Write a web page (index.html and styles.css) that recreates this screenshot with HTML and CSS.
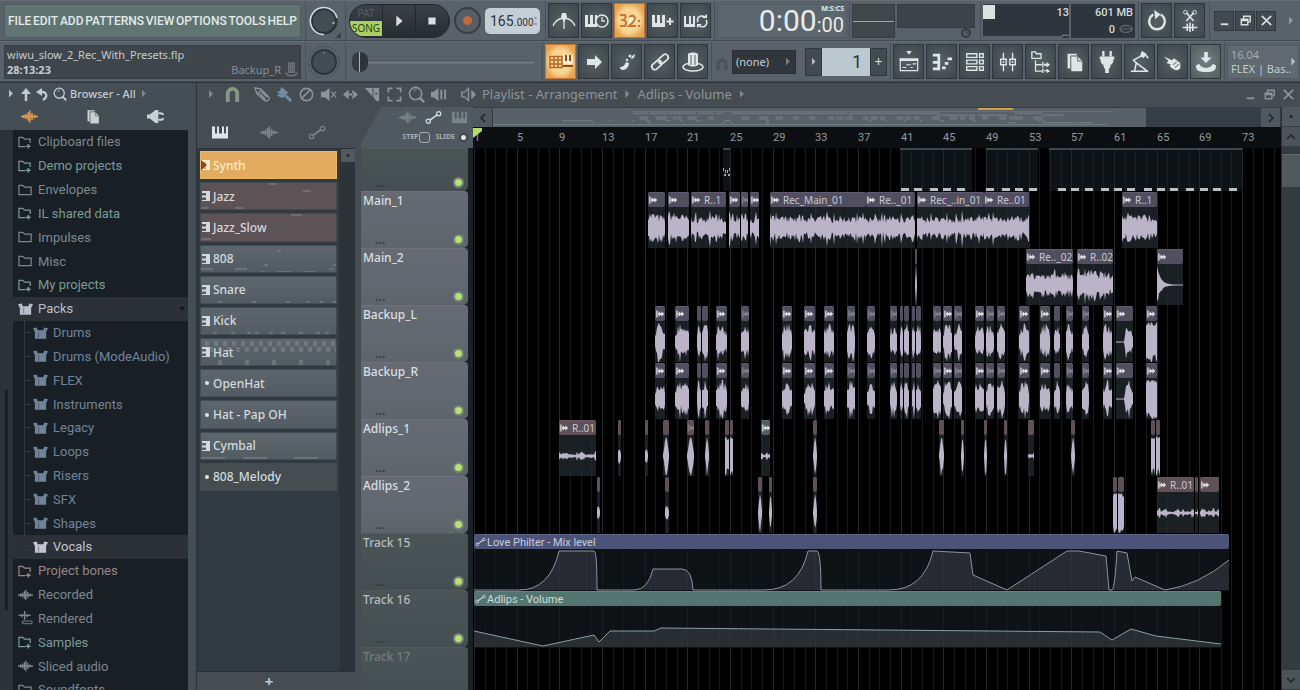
FILE: index.html
```html
<!DOCTYPE html>
<html lang="en">
<head>
<meta charset="UTF-8">
<meta name="viewport" content="width=device-width, initial-scale=1.0">
<title>wiwu_slow_2_Rec_With_Presets.flp</title>
<link rel="stylesheet" href="styles.css">
</head>
<body>
<svg class="defs" aria-hidden="true">
    <symbol id="i-play" viewBox="0 0 20 20"><path d="M7 4l7 6-7 6z" fill="currentColor"/></symbol>
    <symbol id="i-stop" viewBox="0 0 20 20"><path d="M6 6h8v8H6z" fill="currentColor"/></symbol>
    <symbol id="i-metro" viewBox="0 0 24 20"><path d="M1 15C3 10 6 8 11 7M13 7c5 1 8 3 10 8M12 8v10" fill="none" stroke="currentColor" stroke-width="1.300"/><path d="M10 2h4l1 4-3 5-3-5z" fill="currentColor"/></symbol>
    <symbol id="i-wait" viewBox="0 0 24 20"><path d="M0 4h3v9h2V4h3v9h2V4h2v12H0z" fill="currentColor"/><circle cx="17" cy="10" r="6" fill="#4a5459" stroke="currentColor" stroke-width="1.500"/><path d="M17 6v4h3" fill="none" stroke="currentColor" stroke-width="1.300"/></symbol>
    <symbol id="i-count" viewBox="0 0 24 20"><path d="M11 5l8 5-8 5z" fill="#fff6dc"/><path d="M2 4h5q2 3-2 5 5 1 2 6H2" fill="none" stroke="#c47632" stroke-width="2"/><path d="M11 6q5-3 6 1 0 3-6 8h7" fill="none" stroke="#c47632" stroke-width="2"/><path d="M20 9h2v2h-2zM20 14h2v2h-2z" fill="#c47632"/></symbol>
    <symbol id="i-keysplus" viewBox="0 0 24 20"><path d="M1 4h3v8h2V4h3v8h2V4h3v12H1z" fill="currentColor"/><path d="M19 7v7M15.500 10.500h7" stroke="currentColor" stroke-width="2"/></symbol>
    <symbol id="i-keysloop" viewBox="0 0 24 20"><path d="M0 5h2v8h3V5h2v8h2V5h2v11H0z" fill="currentColor"/><path d="M14 11a4 4 0 0 1 7-4M22 9a4 4 0 0 1-7 5" fill="none" stroke="currentColor" stroke-width="1.600"/><path d="M18 7h5V3zM18 13h-5v4z" fill="currentColor"/></symbol>
    <symbol id="i-typing" viewBox="0 0 24 20"><path d="M1 4.500h12v11H1zM1 8h12M1 12h12M5 4v12M9 4v12" fill="none" stroke="#b5692b" stroke-width="1.500"/><path d="M14 3h10v9H14z" fill="#fff0d0"/><path d="M17 3v6M21 3v6M14 14h10" stroke="#8c4a22" stroke-width="2"/></symbol>
    <symbol id="i-arrow" viewBox="0 0 24 20"><path d="M5 7h8V3l7 7-7 7v-4H5z" fill="currentColor"/></symbol>
    <symbol id="i-steps" viewBox="0 0 24 20"><path d="M5 15c3 0 5-2 6-5l3 1c0 4-3 7-6 7-2 0-3-1-3-3z" fill="currentColor"/><circle cx="12" cy="8" r="1.200" fill="currentColor"/><circle cx="15" cy="4" r="1.500" fill="currentColor"/><path d="M16 7l1-3 3-2-1 4z" fill="currentColor"/></symbol>
    <symbol id="i-link" viewBox="0 0 24 20"><g fill="none" stroke="currentColor" stroke-width="1.800" transform="rotate(-42 12 10)"><rect x="2" y="7" width="11" height="6" rx="3"/><rect x="11" y="7" width="11" height="6" rx="3"/></g></symbol>
    <symbol id="i-hat" viewBox="0 0 24 20"><ellipse cx="12" cy="15" rx="10" ry="4" fill="none" stroke="currentColor" stroke-width="1.500"/><path d="M7 2c2-2 8-2 10 0v11c-3 2-7 2-10 0z" fill="currentColor"/><path d="M10 3v10M14 3v10" stroke="#59646a"/></symbol>
    <symbol id="i-playlist" viewBox="0 0 24 24"><path d="M9 0h6l-3 4zM2 8h20v3H2z" fill="currentColor"/><path d="M2.500 8v13.500h19V8M5 18h4M9 15h5M14 18h2M16 14h4" fill="none" stroke="currentColor" stroke-width="1.300"/></symbol>
    <symbol id="i-piano" viewBox="0 0 24 24"><path d="M2 3h8v18H2v-3h5v-4H2v-3h5V6H2z" fill="currentColor"/><path d="M12 17h4v3h-4zM15 12h4v3h-4zM18 7h5v3h-5z" fill="currentColor"/></symbol>
    <symbol id="i-rack" viewBox="0 0 24 24"><path d="M3 3h11v4H3zM3 10h11v4H3zM3 17h11v4H3zM17 3h4v4h-4zM17 10h4v4h-4zM17 17h4v4h-4z" fill="none" stroke="currentColor" stroke-width="1.500"/></symbol>
    <symbol id="i-mixer" viewBox="0 0 24 24"><path d="M7 2v7M7 15v7M17 2v7M17 15v7M4 9h6v6H4zM14 9h6v6h-6zM7 11v2M17 11v2" fill="none" stroke="currentColor" stroke-width="1.500"/></symbol>
    <symbol id="i-tree" viewBox="0 0 24 24"><path d="M2 8V1h4l1 2h5v5zM6 10v12h7M6 15h7M14 12v6M14 19v5" fill="none" stroke="currentColor" stroke-width="1.400"/><path d="M15 14h3v-2l4 3-4 3v-2h-3zM15 21h3v-2l4 3-4 2v-2h-3z" fill="currentColor"/></symbol>
    <symbol id="i-pages" viewBox="0 0 24 24"><path d="M5 3h10v2H8v14H5z" fill="currentColor"/><path d="M9 6h7l5 5v11H9z" fill="currentColor"/><path d="M16 6v5h5" fill="none" stroke="#59636a"/></symbol>
    <symbol id="i-plug" viewBox="0 0 24 24"><path d="M8 0v6M16 0v6" stroke="currentColor" stroke-width="2.500"/><path d="M4 6h16v3h-1c0 4-1 5-3 6l-1 4h-1v5h-4v-5H9l-1-4c-2-1-3-2-3-6H4z" fill="currentColor"/></symbol>
    <symbol id="i-man" viewBox="0 0 24 24"><path d="M14 0l5 3-3 5-4-3z" fill="currentColor"/><path d="M14 5L5 10l3 3-2 9M8 13l12 9M2 22h19M18 4l3 4" fill="none" stroke="currentColor" stroke-width="1.700"/></symbol>
    <symbol id="i-hand" viewBox="0 0 24 24"><path d="M2 6l9 4 2-2 7 5v6l-3 2c-4 0-6-2-9-5l2-1-5-2 2-2z" fill="currentColor"/><path d="M12 15l4-3M14 18l5-4" stroke="#4b555a"/></symbol>
    <symbol id="i-download" viewBox="0 0 24 24"><path d="M10 1h4v6h4l-6 6-6-6h4zM1 16c3-2 4-2 5 0 3 3 9 3 12 0 1-2 2-2 5 0 0 5-3 7-11 7S1 21 1 16z" fill="currentColor"/></symbol>
    <symbol id="i-undo" viewBox="0 0 24 24"><path d="M8 5a8.500 8.500 0 1 0 8 0" fill="none" stroke="currentColor" stroke-width="2.500"/><path d="M9 0l7 5-6 5z" fill="currentColor"/></symbol>
    <symbol id="i-cut" viewBox="0 0 24 24"><path d="M8 3l8 9M16 3l-8 9M4 19h16M9 15v8M12 14v10M15 15v8" fill="none" stroke="currentColor" stroke-width="1.700"/><circle cx="7" cy="2.500" r="2" fill="none" stroke="currentColor"/><circle cx="17" cy="2.500" r="2" fill="none" stroke="currentColor"/></symbol>
    <symbol id="i-min" viewBox="0 0 16 16"><path d="M4 12h8" stroke="currentColor" stroke-width="2"/></symbol>
    <symbol id="i-max" viewBox="0 0 16 16"><path d="M3.500 6.500h7v6h-7zM3 8h8M6 6V3.500h7v6h-2.500" fill="none" stroke="currentColor" stroke-width="1.500"/></symbol>
    <symbol id="i-close" viewBox="0 0 16 16"><path d="M3 3l10 10M13 3L3 13" stroke="currentColor" stroke-width="1.700"/></symbol>
    <symbol id="i-magnet" viewBox="0 0 18 18"><path d="M4 16V8a5 5 0 0 1 10 0v8" fill="none" stroke="currentColor" stroke-width="4"/></symbol>
    <symbol id="i-magnet-on" viewBox="0 0 18 18"><path d="M4 17V8a5 5 0 0 1 10 0v9" fill="none" stroke="#8b959b" stroke-width="4"/><path d="M4 13V8a5 5 0 0 1 10 0v5" fill="none" stroke="#7fa262" stroke-width="2" stroke-dasharray="3 1"/></symbol>
    <symbol id="i-pencil" viewBox="0 0 18 18"><path d="M1 2l6 1 9 9q1 3-4 4L3 8zM4 8l4-4M6 8l6 6M8 6l6 6" fill="none" stroke="currentColor" stroke-width="1.400"/></symbol>
    <symbol id="i-brush" viewBox="0 0 18 18"><path d="M6 1l7 6-6 6-6-3 3-2-3-1 3-2z" fill="currentColor"/><path d="M10 10l6 6" stroke="currentColor" stroke-width="3"/></symbol>
    <symbol id="i-no" viewBox="0 0 18 18"><circle cx="9" cy="9" r="6.500" fill="none" stroke="currentColor" stroke-width="1.700"/><path d="M4 13L13 4" stroke="currentColor" stroke-width="1.700"/></symbol>
    <symbol id="i-mute" viewBox="0 0 18 18"><path d="M1 6h4l5-4v14l-5-4H1z" fill="currentColor"/><path d="M12 6l5 6M17 6l-5 6" stroke="currentColor" stroke-width="1.300"/></symbol>
    <symbol id="i-slip" viewBox="0 0 18 18"><path d="M1 9l6-5v10zM17 9l-6-5v10zM6 8h6v2H6z" fill="currentColor"/></symbol>
    <symbol id="i-knife" viewBox="0 0 18 18"><path d="M1 2h8v9zM10 2h6v14h-3l-3-4z" fill="currentColor"/><path d="M13 7v2" stroke="#454d52" stroke-width="2"/></symbol>
    <symbol id="i-select" viewBox="0 0 18 18"><path d="M2.500 7V2.500H7M11 2.500h4.500V7M15.500 11v4.500H11M7 15.500H2.500V11" fill="none" stroke="currentColor" stroke-width="1.800"/></symbol>
    <symbol id="i-zoom" viewBox="0 0 18 18"><circle cx="8" cy="8" r="6.500" fill="none" stroke="currentColor" stroke-width="1.700"/><path d="M12 12l5 5" stroke="currentColor" stroke-width="2.500"/><path d="M6 6a3 3 0 0 1 3-2" fill="none" stroke="currentColor"/></symbol>
    <symbol id="i-preview" viewBox="0 0 18 18"><path d="M1 6h3l5-4v14l-5-4H1zM11 4h2v10h-2zM15 4h2v10h-2z" fill="currentColor"/></symbol>
    <symbol id="i-speaker" viewBox="0 0 18 18"><path d="M2 6.500h3l4-4v13l-4-4H2z" fill="none" stroke="currentColor" stroke-width="1.500"/><path d="M12 4l5 5-5 5z" fill="currentColor"/></symbol>
    <symbol id="i-keys" viewBox="0 0 18 14"><path d="M1 1h3v7h2V1h2v7h3V1h2v7h2V1h2v12H1z" fill="currentColor"/></symbol>
    <symbol id="i-wave" viewBox="0 0 20 16"><path d="M0 8h20M3.500 6v4M6 5v6M8.500 3v10M10.500 1v14M13 4v8M16 6v4" stroke="currentColor" stroke-width="1.800"/></symbol>
    <symbol id="i-auto" viewBox="0 0 18 14"><path d="M5 10l8-6" stroke="currentColor" stroke-width="1.700"/><circle cx="3.500" cy="11" r="2.200" fill="none" stroke="currentColor" stroke-width="1.300"/><circle cx="14.500" cy="3" r="2.200" fill="none" stroke="currentColor" stroke-width="1.300"/></symbol>
    <symbol id="i-folder" viewBox="0 0 16 14"><path d="M1 12V2h4l2 2h7v8z" fill="none" stroke="currentColor" stroke-width="1.300"/></symbol>
    <symbol id="i-folderplus" viewBox="0 0 16 14"><path d="M8 12H1V2h4l2 2h6v4" fill="none" stroke="currentColor" stroke-width="1.300"/><path d="M11 9v5M8.500 11.500h5" stroke="currentColor" stroke-width="1.700"/></symbol>
    <symbol id="i-pack" viewBox="0 0 16 14"><path d="M0 2l4-1 1 3h6l1-3 4 1-2 4v7H2V6z" fill="currentColor"/><path d="M6 6v6" stroke="#191f24" stroke-opacity=".4"/></symbol>
    <symbol id="i-render" viewBox="0 0 16 16"><path d="M0 5h14M4 3v4M7 0v10M10 3v4" stroke="currentColor" stroke-width="1.600"/><path d="M4.500 11.500h11v3h-11z" fill="none" stroke="currentColor"/></symbol>
    <symbol id="i-clip" viewBox="0 0 10 8"><path d="M1 0v8M2 4h6" stroke="currentColor" stroke-width="1.400"/><path d="M3 1l3 3-3 3zM6 1l3 3-3 3z" fill="currentColor"/></symbol>
    <symbol id="i-roll" viewBox="0 0 8 10"><path d="M0 0h8v10H0V9h4V6.500H0v-2h4V2H0z" fill="currentColor"/></symbol>
    <symbol id="i-up" viewBox="0 0 14 14"><path d="M7 14V5" stroke="currentColor" stroke-width="2.500"/><path d="M2 7l5-6 5 6z" fill="currentColor"/></symbol>
    <symbol id="i-back" viewBox="0 0 14 14"><path d="M4 5c6-1 9 4 3 8" fill="none" stroke="currentColor" stroke-width="2.200"/><path d="M0 5l6-4v8z" fill="currentColor"/></symbol>
    <symbol id="i-jack" viewBox="0 0 18 16"><path d="M0 6h3l6-5h3v14H9l-6-5H0z" fill="currentColor"/><path d="M12 4.500h2q3 0 3 2M12 11.500h2q3 0 3-2" fill="none" stroke="currentColor" stroke-width="2"/></symbol>
    <symbol id="i-knob" viewBox="0 0 34 34"><circle cx="17" cy="17" r="15.500" fill="none" stroke="#3d464c" stroke-width="1.500" stroke-dasharray="1 2.500"/><circle cx="17" cy="17" r="13" fill="#2d3439"/><circle cx="17" cy="17" r="11" fill="#434c53"/><path d="M17 7v2" stroke="#868f94"/></symbol>
</svg>

<header class="toolbar">
    <div class="bar">
        <div class="cell cell-main">
            <nav class="menu">
                <a href="#">FILE</a><a href="#">EDIT</a><a href="#">ADD</a><a href="#">PATTERNS</a><a href="#">VIEW</a><a href="#">OPTIONS</a><a href="#">TOOLS</a><a href="#">HELP</a>
            </nav>
        </div>
        <div class="cell cell-knob">
            <svg class="knob" viewBox="0 0 34 34"><circle cx="17" cy="17" r="13.500" fill="#2a3135"/><circle cx="17" cy="17" r="11" fill="#434c53"/><path d="M17 30.500A13.500 13.500 0 1 1 30 14" fill="none" stroke="#cfd8dc" stroke-width="1.600"/><path d="M25 19h3" stroke="#cfd8dc"/><path d="M34 28v6h-6z" fill="#394146"/></svg>
        </div>
        <div class="cell cell-transport">
            <div class="transport">
                <button class="mode"><span class="mode-pat">PAT</span><span class="mode-song">SONG</span></button>
                <button aria-label="Play"><svg><use href="#i-play"/></svg></button>
                <button aria-label="Stop"><svg><use href="#i-stop"/></svg></button>
            </div>
            <button class="record" aria-label="Record"></button>
            <label class="tempo"><input type="text" value="165" aria-label="Tempo"><span>.000</span><i></i></label>
        </div>
        <div class="cell cell-tools">
            <button class="tool" aria-label="Metronome"><svg><use href="#i-metro"/></svg></button>
            <button class="tool" aria-label="Wait for input"><svg><use href="#i-wait"/></svg></button>
            <button class="tool on" aria-label="Countdown"><svg><use href="#i-count"/></svg></button>
            <button class="tool" aria-label="Overdub"><svg><use href="#i-keysplus"/></svg></button>
            <button class="tool" aria-label="Loop record"><svg><use href="#i-keysloop"/></svg></button>
        </div>
        <div class="cell cell-time">
            <div class="time"><span class="time-big">0:00</span><span class="time-small"><small>M:S:CS</small><b>:00</b></span></div>
        </div>
        <div class="cell cell-scope">
            <div class="scope"></div>
            <div class="meter"><div class="meter-box"></div><svg viewBox="0 0 12 10"><circle cx="6" cy="5" r="4" fill="none" stroke="#343c41" stroke-width="2"/><path d="M6 1v4h3" stroke="#343c41" fill="none"/></svg></div>
        </div>
        <div class="cell cell-cpu">
            <div class="cpu">
                <div class="cpu-load"><i></i><span>13</span><svg viewBox="0 0 85 18" preserveAspectRatio="none"><path d="M0 17h76q3 0 3-2h6" fill="none" stroke="#7d878c"/></svg></div>
                <div class="cpu-mem"><span>601 MB</span><span>0 <svg viewBox="0 0 14 10"><ellipse cx="7" cy="5" rx="6" ry="3.500" fill="none" stroke="#5e676d" stroke-width="1.500"/><path d="M1 5h12" stroke="#5e676d"/></svg></span></div>
            </div>
        </div>
        <div class="cell cell-edit">
            <button class="tool" aria-label="Undo"><svg><use href="#i-undo"/></svg></button>
            <button class="tool" aria-label="Cut"><svg><use href="#i-cut"/></svg></button>
        </div>
        <div class="cell cell-window">
            <button class="win" aria-label="Minimize"><svg><use href="#i-min"/></svg></button>
            <button class="win" aria-label="Restore"><svg><use href="#i-max"/></svg></button>
            <button class="win" aria-label="Close"><svg><use href="#i-close"/></svg></button>
            <i class="tri"></i>
        </div>
    </div>
    <div class="bar">
        <div class="cell cell-main">
            <div class="hint">
                <div class="hint-file">wiwu_slow_2_Rec_With_Presets.flp</div>
                <div class="hint-row"><b>28:13:23</b><span>Backup_R <svg viewBox="0 0 14 16"><path d="M4 1h6v10H4zM6 1v10M8 1v10M1 11c0 5 12 5 12 0" fill="none" stroke="currentColor" stroke-width="1.500"/></svg></span></div>
            </div>
        </div>
        <div class="cell cell-knob"><svg class="knob"><use href="#i-knob"/></svg></div>
        <div class="cell cell-slider"><input class="pitch" type="range" min="0" max="100" value="0" aria-label="Main pitch"></div>
        <div class="cell cell-tools">
            <button class="tool on" aria-label="Typing keyboard"><svg><use href="#i-typing"/></svg></button>
            <button class="tool" aria-label="Scroll"><svg><use href="#i-arrow"/></svg></button>
            <button class="tool" aria-label="Step edit"><svg><use href="#i-steps"/></svg></button>
            <button class="tool" aria-label="Link"><svg><use href="#i-link"/></svg></button>
            <button class="tool" aria-label="Multilink"><svg><use href="#i-hat"/></svg></button>
        </div>
        <div class="cell cell-pattern">
            <svg class="snap-icon"><use href="#i-magnet"/></svg>
            <div class="snap"><select aria-label="Snap"><option>(none)</option></select><i class="tri"></i></div>
            <div class="pat-pick">
                <button aria-label="Pattern menu"><i class="tri"></i></button>
                <input type="text" value="1" aria-label="Pattern number">
                <button aria-label="Add pattern">+</button>
            </div>
        </div>
        <div class="cell cell-views">
            <button class="tool" aria-label="Playlist"><svg><use href="#i-playlist"/></svg></button>
            <button class="tool" aria-label="Piano roll"><svg><use href="#i-piano"/></svg></button>
            <button class="tool" aria-label="Channel rack"><svg><use href="#i-rack"/></svg></button>
            <button class="tool" aria-label="Mixer"><svg><use href="#i-mixer"/></svg></button>
            <button class="tool" aria-label="Browser"><svg><use href="#i-tree"/></svg></button>
            <button class="tool" aria-label="Project picker"><svg><use href="#i-pages"/></svg></button>
            <button class="tool" aria-label="Plugins"><svg><use href="#i-plug"/></svg></button>
            <button class="tool" aria-label="Tempo tapper"><svg><use href="#i-man"/></svg></button>
            <button class="tool" aria-label="Touch control"><svg><use href="#i-hand"/></svg></button>
            <button class="tool lit" aria-label="Download"><svg><use href="#i-download"/></svg></button>
        </div>
        <div class="cell cell-news">
            <a class="news" href="#"><span class="news-text"><small>16.04</small><span>FLEX | Bas..</span></span><i class="tri"></i></a>
        </div>
    </div>
</header>

<div class="work">
    <aside class="browser">
        <div class="browser-head">
            <div class="browser-title">
                <i class="tri"></i>
                <svg><use href="#i-up"/></svg>
                <svg><use href="#i-back"/></svg>
                <svg><use href="#i-zoom"/></svg>
                <span>Browser - All</span>
                <i class="tri dim"></i>
            </div>
            <div class="browser-tabs">
                <button class="active" aria-label="All"><svg><use href="#i-wave"/></svg></button>
                <button aria-label="Files"><svg><use href="#i-pages"/></svg></button>
                <button aria-label="Plugins"><svg><use href="#i-jack"/></svg></button>
            </div>
        </div>
        <div class="browser-body">
            <div class="browser-scroll"><i></i></div>
            <div class="files" id="files"></div>
        </div>
    </aside>

    <main class="playlist">
        <div class="titlebar">
            <i class="tri dim"></i>
            <div class="title-tools">
                <svg class="t-magnet"><use href="#i-magnet-on"/></svg>
                <svg><use href="#i-pencil"/></svg>
                <svg class="t-brush"><use href="#i-brush"/></svg>
                <svg><use href="#i-no"/></svg>
                <svg><use href="#i-mute"/></svg>
                <svg><use href="#i-slip"/></svg>
                <svg><use href="#i-knife"/></svg>
                <svg><use href="#i-select"/></svg>
                <svg><use href="#i-zoom"/></svg>
                <svg><use href="#i-preview"/></svg>
            </div>
            <svg><use href="#i-speaker"/></svg>
            <div class="crumbs">Playlist - Arrangement <i class="tri dim"></i> Adlips - Volume <i class="tri dim"></i></div>
            <div class="title-win">
                <svg><use href="#i-min"/></svg>
                <svg><use href="#i-max"/></svg>
                <svg><use href="#i-close"/></svg>
            </div>
        </div>
        <div class="panes">
            <section class="picker">
                <div class="picker-tabs">
                    <svg class="active"><use href="#i-keys"/></svg>
                    <svg><use href="#i-wave"/></svg>
                    <svg><use href="#i-auto"/></svg>
                </div>
                <div class="picker-body">
                    <div class="patterns" id="patterns"></div>
                    <div class="picker-scroll"><i></i></div>
                </div>
                <button class="picker-add" aria-label="Add pattern">+</button>
            </section>
            <section class="tracks">
                <div class="track-head">
                    <div class="track-tabs">
                        <svg><use href="#i-wave"/></svg>
                        <svg class="active"><use href="#i-auto"/></svg>
                        <svg><use href="#i-keys"/></svg>
                    </div>
                    <div class="track-opts">
                        <label>STEP <input type="checkbox"></label>
                        <label>SLIDE <input type="radio" checked></label>
                    </div>
                </div>
                <div class="track-list" id="tracks"></div>
            </section>
            <section class="arrange">
                <div class="overview">
                    <button aria-label="Scroll left"><svg viewBox="0 0 6 10"><path d="M5 1L1 5l4 4" fill="none" stroke="#1e2528" stroke-width="1.500"/></svg></button>
                    <div class="overview-map"><svg class="overview-thumb" id="overview" viewBox="0 0 650 20" preserveAspectRatio="none"></svg></div>
                    <button aria-label="Scroll right"><svg viewBox="0 0 6 10"><path d="M1 1l4 4-4 4" fill="none" stroke="#1e2528" stroke-width="1.500"/></svg></button>
                </div>
                <div class="ruler" id="ruler"><i class="playhead"></i></div>
                <div class="canvas" id="canvas"></div>
            </section>
            <div class="vscroll">
                <button class="vdot" aria-label="Zoom"></button>
                <button aria-label="Scroll up"><svg viewBox="0 0 10 6"><path d="M1 5l4-4 4 4" fill="none" stroke="#20272b" stroke-width="1.500"/></svg></button>
                <div class="vtrack"><i></i></div>
                <button aria-label="Scroll down"><svg viewBox="0 0 10 6"><path d="M1 1l4 4 4-4" fill="none" stroke="#20272b" stroke-width="1.500"/></svg></button>
            </div>
        </div>
    </main>
</div>
<script src="script.js"></script>
</body>
</html>
```

FILE: styles.css
```css
* {
    box-sizing: border-box;
}
body {
    margin: 0;
    height: 100vh;
    display: flex;
    flex-direction: column;
    overflow: hidden;
    background: #454d52;
    color: #c3ccd1;
    font-family: "Noto Sans", "Open Sans", sans-serif;
    font-size: 12px;
}
button, input, select {
    font: inherit;
    color: inherit;
    margin: 0;
    padding: 0;
    border: 0;
    background: none;
}
a {
    color: inherit;
    text-decoration: none;
}
svg {
    display: block;
    flex: none;
}
.defs {
    display: none;
}
.tri {
    flex: none;
    width: 4px;
    height: 8px;
    background: #b5bfc4;
    clip-path: polygon(0 0, 100% 50%, 0 100%);
}
.tri.dim {
    background: #80898e;
}

/* top toolbar */
.toolbar {
    flex: none;
    border-bottom: 1px solid #2d3439;
}
.bar {
    display: flex;
    height: 41px;
    background: #59626a;
    border-top: 1px solid #646d74;
    border-bottom: 1px solid #424a51;
}
.cell {
    flex: none;
    display: flex;
    align-items: center;
    padding: 2px;
    border-right: 1px solid #4a5259;
}
.cell-main {
    width: 306px;
    padding-left: 4px;
}
.cell-knob {
    width: 40px;
    padding-left: 1px;
}
.cell-transport {
    width: 200px;
    padding-left: 3px;
}
.cell-slider {
    width: 197px;
    padding: 0 8px 0 6px;
}
.cell-tools {
    gap: 2px;
    width: 169px;
}
.cell-time {
    width: 135px;
}
.cell-scope {
    width: 131px;
    gap: 2px;
}
.cell-cpu {
    width: 158px;
}
.cell-edit {
    width: 71px;
    gap: 2px;
}
.cell-pattern {
    width: 179px;
    padding-left: 3px;
}
.cell-views {
    width: 334px;
    gap: 2px;
}
.cell-window, .cell-news {
    flex: 1;
    border: 0;
}
.cell-window {
    gap: 1px;
    padding-left: 4px;
}
.cell-window .tri {
    margin-left: 12px;
    opacity: .6;
}
.menu {
    display: flex;
    flex: 1;
    align-items: center;
    justify-content: space-between;
    height: 34px;
    margin-right: 2px;
    padding: 0 3px;
    background: #607572;
    border: 1px solid #4c5b5c;
    color: #e2eaea;
    font: 500 12px Roboto, "Noto Sans", sans-serif;
}
.hint {
    flex: 1;
    height: 34px;
    padding: 1px 2px;
    margin-right: 2px;
    background: #3e464c;
    border: 1px solid #363e43;
    font-size: 11px;
    line-height: 15px;
}
.hint-row {
    display: flex;
    justify-content: space-between;
}
.hint-row span {
    display: flex;
    align-items: center;
    gap: 4px;
    color: #868f94;
}
.hint-row svg {
    width: 13px;
    height: 15px;
    color: #6a7378;
}
.knob {
    width: 34px;
    height: 34px;
}
.transport {
    display: flex;
    width: 101px;
    height: 34px;
    border-radius: 17px;
    overflow: hidden;
    background: linear-gradient(#394147, #272d32);
    border: 1px solid #23292d;
}
.transport button {
    flex: 1;
    display: flex;
    align-items: center;
    justify-content: center;
    border-right: 1px solid #22282c;
    color: #d7dfdf;
}
.transport svg {
    width: 18px;
    height: 18px;
}
.transport .mode {
    flex-direction: column;
    font: 10px/15px "Noto Sans", sans-serif;
}
.mode span {
    width: 32px;
}
.mode-pat {
    color: #596167;
}
.mode-song {
    background: #a8d162;
    color: #2c3c1d;
    border-radius: 0 0 0 8px;
}
.record {
    width: 27px;
    height: 27px;
    margin-left: 4px;
    border-radius: 50%;
    border: 2px solid #363d42;
    background: radial-gradient(#c4673f 0 4px, #555e64 5px);
}
.tempo {
    display: flex;
    align-items: baseline;
    width: 55px;
    height: 26px;
    margin-left: 4px;
    padding: 1px 3px 0 5px;
    border-radius: 5px;
    background: #c3ced5;
    color: #2d343a;
    font: 10px/24px Roboto, "Noto Sans", sans-serif;
    overflow: hidden;
}
.tempo input {
    width: 24px;
    font-size: 14px;
    line-height: 24px;
}
.tempo i {
    align-self: center;
    width: 4px;
    height: 8px;
    margin-left: auto;
    border-top: 2px solid #98a4ab;
    border-bottom: 2px solid #98a4ab;
}
.tool {
    display: flex;
    align-items: center;
    justify-content: center;
    width: 31px;
    height: 35px;
    background: radial-gradient(#566065, #3d464b);
    border: 1px solid #2f373c;
    color: #dfe6e6;
}
.tool svg {
    width: 24px;
    height: 20px;
}
.cell-views svg, .cell-edit svg {
    height: 22px;
}
.tool.on {
    background: radial-gradient(#f8d795 0 10px, #e6a54f 16px);
    border-color: #c27231;
}
.tool.lit {
    background: radial-gradient(#74807f, #525c61);
}
.time {
    display: flex;
    align-items: center;
    justify-content: flex-end;
    width: 130px;
    height: 34px;
    padding-right: 2px;
    border: 1px solid #525b62;
    background: #5c666d;
    color: #e6ecec;
    font-family: Roboto, "Noto Sans", sans-serif;
}
.time-big {
    font-size: 30px;
    line-height: 32px;
}
.time-small {
    display: flex;
    flex-direction: column;
}
.time-small small {
    align-self: flex-end;
    font: bold 7px/8px "Noto Sans", sans-serif;
}
.time-small b {
    font-size: 20px;
    font-weight: normal;
    line-height: 24px;
}
.scope {
    width: 43px;
    height: 34px;
    background: linear-gradient(#3f474d 16px, #a2a5a9 16px 17px, #3f474d 17px);
    border: 1px solid #363e43;
}
.meter {
    display: flex;
    flex-direction: column;
    align-items: flex-end;
    height: 34px;
}
.meter-box {
    width: 78px;
    height: 24px;
    background: #3c444a;
    border: 1px solid #363e43;
}
.meter svg {
    width: 12px;
    height: 10px;
    margin-right: 3px;
}
.cpu {
    display: flex;
    width: 152px;
    height: 34px;
    gap: 2px;
    color: #d5dcde;
    font: 500 11px/17px Roboto, "Noto Sans", sans-serif;
}
.cpu > div {
    background: #2e353d;
}
.cpu-load {
    display: grid;
    grid-template-columns: 12px 1fr;
    width: 86px;
}
.cpu-load i {
    height: 14px;
    margin-top: 1px;
    background: #dce3df;
}
.cpu-load span {
    text-align: right;
}
.cpu-load svg {
    grid-column: 1 / 3;
    width: 100%;
    height: 17px;
}
.cpu-mem {
    flex: 1;
}
.cpu-mem span {
    display: flex;
    justify-content: flex-end;
    align-items: center;
    gap: 4px;
    padding-right: 2px;
}
.cpu-mem svg {
    width: 14px;
    height: 10px;
}
.win {
    display: flex;
    align-items: center;
    justify-content: center;
    width: 20px;
    height: 20px;
    background: #414a50;
    border: 1px solid #30383d;
    color: #d7dfdf;
}
.win svg {
    width: 15px;
    height: 15px;
}
.pitch {
    appearance: none;
    width: 100%;
    height: 24px;
    margin: 0;
    background: linear-gradient(#59626a 10px, #4a5258 10px 11px, #69737a 11px 14px, #59626a 14px);
}
.pitch::-webkit-slider-thumb {
    appearance: none;
    width: 16px;
    height: 20px;
    border-radius: 8px;
    background: linear-gradient(90deg, #343b40 7px, #aab2b5 7px 8px, #2e3439 8px);
}
.snap-icon {
    width: 14px;
    height: 14px;
    margin: 6px 3px 0 0;
    color: #4a5258;
}
.snap {
    display: flex;
    align-items: center;
    width: 64px;
    height: 24px;
    margin-right: 9px;
    padding: 0 5px 0 3px;
    background: #30363b;
    border: 1px solid #272d31;
}
.snap select {
    appearance: none;
    flex: 1;
    width: 40px;
    font-size: 11px;
}
.snap .tri {
    background: #727c81;
}
.pat-pick {
    display: flex;
    height: 28px;
}
.pat-pick button {
    display: flex;
    align-items: center;
    justify-content: center;
    width: 17px;
    background: #414a50;
    border: 1px solid #30383d;
    color: #d7dfdf;
    font-size: 14px;
}
.pat-pick input {
    width: 48px;
    padding-right: 8px;
    text-align: right;
    background: #bcc8cf;
    color: #2d343a;
    font: 18px Roboto, "Noto Sans", sans-serif;
}
.news {
    display: flex;
    align-items: center;
    flex: 1;
    height: 34px;
    padding: 0 3px;
    border: 1px solid #525b62;
    background: #5f696f;
    font-size: 11px;
    line-height: 14px;
    white-space: nowrap;
}
.news-text {
    flex: 1;
    display: flex;
    flex-direction: column;
}
.news small {
    font-size: 11px;
    color: #a6afb4;
}

/* browser */
.work {
    flex: 1;
    display: flex;
    min-height: 0;
}
.browser {
    flex: none;
    width: 197px;
    display: flex;
    flex-direction: column;
    background: #454e54;
    border-right: 1px solid #2c3338;
}
.browser-head {
    height: 47px;
    margin-right: 8px;
}
.browser-title {
    display: flex;
    align-items: center;
    gap: 3px;
    height: 21px;
    padding-left: 9px;
    font-size: 11px;
    font-weight: 500;
    white-space: nowrap;
}
.browser-title svg {
    width: 14px;
    height: 14px;
}
.browser-title .tri:first-child {
    margin-right: 3px;
}
.browser-title .tri:last-child {
    margin-left: 3px;
}
.browser-tabs {
    display: flex;
    height: 25px;
}
.browser-tabs button {
    flex: 1;
    display: flex;
    align-items: center;
    justify-content: center;
    padding-right: 3px;
    color: #c8d2d5;
}
.browser-tabs svg {
    width: 17px;
    height: 17px;
}
.browser-tabs .active {
    color: #dc9f52;
}
.browser-body {
    flex: 1;
    display: flex;
    min-height: 0;
    margin-right: 8px;
}
.browser-scroll {
    width: 13px;
    padding: 260px 0 0 5px;
    background: #2b3238;
}
.browser-scroll i {
    display: block;
    width: 3px;
    height: 220px;
    background: #1a1f23;
}
.files {
    flex: 1;
    display: flex;
    flex-direction: column;
    height: 572px;
    background: #192025;
    font: 13px Roboto, "Noto Sans", sans-serif;
    overflow: hidden;
}
.file {
    flex: 1;
    display: flex;
    align-items: center;
    gap: 5px;
    padding-left: 5px;
    color: #7c8790;
    white-space: nowrap;
}
.file svg {
    width: 15px;
    height: 14px;
}
.file.teal {
    color: #7b9a98;
}
.file.red {
    color: #998486;
}
.file.child {
    margin-left: 11px;
    border-left: 1px solid #30393e;
    color: #71839a;
}
.file.child::before {
    content: "";
    width: 6px;
    height: 1px;
    margin: 0 -3px 0 -5px;
    background: #30393e;
}
.file.open {
    background: #2b3136;
    color: #b7bec9;
}
.file.child.open {
    margin-left: 0;
    padding-left: 17px;
    border-left: 0;
    color: #c3c4d0;
}
.file .caret {
    margin-left: auto;
    margin-right: 3px;
    border: 3px solid transparent;
    border-top: 4px solid #15191c;
    border-bottom: 0;
}

/* playlist window */
.playlist {
    flex: 1;
    display: flex;
    flex-direction: column;
    min-width: 0;
}
.titlebar {
    flex: none;
    display: flex;
    align-items: center;
    height: 24px;
    padding: 0 4px 2px 12px;
    color: #8d9498;
    font-size: 13px;
}
.titlebar svg {
    width: 17px;
    height: 17px;
}
.title-tools {
    display: flex;
    gap: 5px;
    margin: 0 13px 0 11px;
}
.titlebar .t-magnet {
    margin-right: 8px;
}
.titlebar .t-brush {
    color: #718ba0;
}
.crumbs {
    display: flex;
    align-items: center;
    gap: 8px;
    margin-left: 5px;
    white-space: nowrap;
}
.title-win {
    display: flex;
    gap: 4px;
    margin-left: auto;
}
.title-win svg {
    width: 15px;
    height: 15px;
}
.panes {
    flex: 1;
    display: flex;
    min-height: 0;
}
.picker {
    flex: none;
    width: 158px;
    display: flex;
    flex-direction: column;
}
.picker-tabs {
    flex: none;
    display: flex;
    align-items: center;
    justify-content: space-between;
    height: 41px;
    padding: 9px 29px 0 14px;
    color: #7d858a;
}
.picker-tabs svg {
    width: 18px;
    height: 15px;
}
.picker-tabs .active {
    color: #e0e4e8;
}
.picker-body {
    flex: 1;
    display: flex;
    min-height: 0;
    background: #323a41;
    border-top: 1px solid #293036;
}
.patterns {
    flex: 1;
    display: grid;
    grid-auto-rows: 1fr;
    gap: 3px;
    height: 340px;
    margin-top: 2px;
    padding: 0 3px;
}
.pattern {
    display: flex;
    align-items: center;
    position: relative;
    gap: 3px;
    padding-left: 1px;
    background: linear-gradient(#5d666d, #535c62);
    border: 1px solid #434c53;
    color: #d3dadd;
    font-size: 12px;
    font-weight: 500;
    text-align: left;
    overflow: hidden;
}
.pattern.red {
    background: #5d5256;
}
.pattern.dark {
    background: #454d50;
}
.pattern.selected {
    background: #e2ab5f;
    border-color: #eab668;
    color: #fbecc9;
}
.pattern-arrow {
    position: absolute;
    left: -1px;
    width: 7px;
    height: 12px;
    background: #8f4524;
    clip-path: polygon(0 0, 100% 50%, 0 100%);
}
.pattern svg.roll {
    width: 8px;
    height: 10px;
}
.pattern svg.notes {
    position: absolute;
    left: 0;
    top: 0;
    width: 100%;
    height: 100%;
    fill: #a7a99f;
    opacity: .3;
}
.dot {
    flex: none;
    width: 4px;
    height: 4px;
    margin: 0 1px 0 3px;
    border-radius: 50%;
    background: #dde3e5;
}
.picker-scroll {
    width: 15px;
    background: #2c343a;
    border-left: 1px solid #283036;
}
.picker-scroll i {
    display: block;
    height: 13px;
    background: radial-gradient(#1e2427 0 1px, #525b61 2px);
}
.picker-add {
    flex: none;
    height: 19px;
    padding-right: 14px;
    border-top: 1px solid #293036;
    font-size: 15px;
    font-weight: bold;
    line-height: 17px;
}
.tracks {
    flex: none;
    width: 118px;
    display: flex;
    flex-direction: column;
    padding-left: 6px;
}
.track-head {
    flex: none;
    height: 41px;
    display: flex;
    flex-direction: column;
    align-items: flex-end;
    padding: 2px 5px 0 0;
    background: #50595f;
    clip-path: polygon(20px 0, 100% 0, 100% 100%, 0 100%, 0 36px);
}
.track-tabs {
    display: flex;
    gap: 9px;
    color: #7a8388;
}
.track-tabs svg {
    width: 17px;
    height: 17px;
}
.track-tabs .active {
    color: #d5dbdf;
}
.track-opts {
    display: flex;
    gap: 5px;
    color: #a5adb1;
    font: bold 7px/22px "Noto Sans", sans-serif;
}
.track-opts label {
    display: flex;
    align-items: center;
    gap: 1px;
}
.track-opts input {
    appearance: none;
    width: 11px;
    height: 11px;
    border: 1px solid #a5adb1;
    border-radius: 3px;
}
.track-opts input[type=radio] {
    width: 9px;
    height: 9px;
    border: 0;
    margin-left: 3px;
    border-radius: 50%;
    background: radial-gradient(#dfe4e6 0 2px, #40484d 3px);
}
.track-list {
    flex: 1;
    display: flex;
    flex-direction: column;
    min-height: 0;
    padding-right: 5px;
    background: #1a2025;
    overflow: hidden;
}
.track {
    flex: none;
    display: grid;
    grid-template-columns: 1fr 12px;
    grid-template-rows: 1fr 14px;
    height: 57px;
    padding: 0 3px 0 2px;
    background: linear-gradient(#666b73, #5d656b);
    border-top: 1px solid #6d737a;
    border-radius: 0 4px 5px 0;
    color: #d9dfe1;
    font-weight: 500;
    line-height: 17px;
}
.track.partial {
    height: 43px;
    border-radius: 0 0 5px 0;
}
.track.plain {
    background: linear-gradient(#4b5455, #454e51);
    border-color: #525a5d;
    color: #b4bbbd;
}
.track.off {
    color: #737b7e;
}
.track-name {
    grid-column: 1 / 3;
}
.track-more {
    margin-left: 12px;
    color: #30373b;
    font-size: 13px;
    line-height: 10px;
}
.led {
    appearance: none;
    grid-column: 2;
    width: 11px;
    height: 11px;
    border: 2px solid #73837a;
    border-radius: 50%;
    background: #b7e26f;
}

/* timeline */
.arrange {
    flex: 1;
    display: flex;
    flex-direction: column;
    min-width: 0;
}
.overview {
    flex: none;
    display: flex;
    height: 20px;
    border-top: 1px solid #363e43;
}
.overview button {
    display: flex;
    align-items: center;
    justify-content: center;
    width: 20px;
    background: #4f585e;
    border-right: 1px solid #343c41;
}
.overview button svg {
    width: 6px;
    height: 10px;
}
.overview-map {
    flex: 1;
    background: #363e47;
}
.overview-thumb {
    width: 85%;
    height: 19px;
    background: #586167;
}
.ruler {
    position: relative;
    flex: none;
    height: 21px;
    background: #0c0f11;
    color: #929a9f;
    font: 11px/22px Roboto, "Noto Sans", sans-serif;
    overflow: hidden;
}
.ruler span {
    position: absolute;
}
.playhead {
    position: absolute;
    z-index: 1;
    left: 0;
    top: 1px;
    width: 9px;
    height: 10px;
    background: #b2dd6c;
    clip-path: polygon(0 0, 100% 0, 100% 30%, 0 100%);
}
.canvas {
    flex: 1;
    position: relative;
    min-height: 0;
    background: #000;
    overflow: hidden;
}
.gridlines {
    position: absolute;
    left: 0;
    top: 0;
    width: 100%;
    height: 100%;
}
.clip {
    position: absolute;
    height: 56px;
    background: rgba(36, 44, 50, .7);
    overflow: hidden;
}
.clip-name {
    display: flex;
    align-items: center;
    gap: 3px;
    height: 15px;
    padding-left: 1px;
    border-radius: 2px;
    background: #514e60;
    border-top: 1px solid #5f5c72;
    color: #c9c9d2;
    font-size: 10px;
    line-height: 13px;
    white-space: nowrap;
    overflow: hidden;
}
.clip-name svg {
    width: 9px;
    height: 8px;
    color: #dfe1e6;
}
.clip-name svg.faded {
    color: #85838f;
}
.clip.red .clip-name {
    background: #5f4f57;
    border-color: #6b5a63;
}
.clip.grey .clip-name {
    background: #505c62;
    border-color: #5e6b70;
}
.clip .wave {
    width: 100%;
    height: 41px;
    fill: #bbb4c9;
}
.clip.auto {
    background: rgba(20, 25, 29, .7);
    height: 57px;
}
.clip.auto .clip-name {
    gap: 1px;
    font-family: Roboto, "Noto Sans", sans-serif;
    font-size: 11px;
    background: #4b5378;
    border-color: #5a6286;
    color: #c7cbdb;
}
.clip.auto .clip-name svg {
    width: 11px;
    height: 10px;
}
.clip.auto.green .clip-name {
    background: #53756f;
    border-color: #638681;
    color: #d0dbd8;
}
.clip.auto .curve {
    height: 42px;
    fill: rgba(60, 62, 72, .55);
    stroke: #8c93a0;
}
.clip.auto.green .curve {
    fill: rgba(60, 68, 72, .55);
    stroke: #87a09f;
}
.region {
    position: absolute;
    top: 0;
    height: 43px;
    background: rgba(36, 44, 50, .4);
    border-top: 2px solid #40484d;
}
.note {
    position: absolute;
    top: 40px;
    width: 8px;
    height: 3px;
    background: #b9c0c6;
}
.vscroll {
    flex: none;
    display: flex;
    flex-direction: column;
    width: 19px;
    background: #333b42;
    border-left: 1px solid #293036;
}
.vscroll button {
    display: flex;
    align-items: center;
    justify-content: center;
    height: 20px;
    background: #4b545a;
    border-bottom: 1px solid #363e43;
}
.vscroll svg {
    width: 10px;
    height: 6px;
}
.vscroll .vdot {
    background: radial-gradient(#1e2427 0 1px, #50595f 2px);
}
.vtrack {
    flex: 1;
    padding-top: 7px;
}
.vtrack i {
    display: block;
    height: 33px;
    background: #50595f;
    border-top: 1px solid #61696f;
}
```

FILE: script.js
```javascript
var BAR = 32 / 3;

function el(tag, className, parent) {
    var node = document.createElement(tag);
    node.className = className;
    parent.appendChild(node);
    return node;
}

function icon(name, cls) {
    return '<svg class="' + (cls || '') + '"><use href="#i-' + name + '"/></svg>';
}

// browser tree: name, icon, class
var files = [
    ['Clipboard files', 'folderplus', ''],
    ['Demo projects', 'folderplus', 'teal'],
    ['Envelopes', 'folder', ''],
    ['IL shared data', 'folderplus', 'teal'],
    ['Impulses', 'folder', ''],
    ['Misc', 'folder', ''],
    ['My projects', 'folderplus', 'teal'],
    ['Packs', 'pack', 'open'],
    ['Drums', 'pack', 'child'],
    ['Drums (ModeAudio)', 'pack', 'child'],
    ['FLEX', 'pack', 'child'],
    ['Instruments', 'pack', 'child'],
    ['Legacy', 'pack', 'child'],
    ['Loops', 'pack', 'child'],
    ['Risers', 'pack', 'child'],
    ['SFX', 'pack', 'child'],
    ['Shapes', 'pack', 'child'],
    ['Vocals', 'pack', 'child open'],
    ['Project bones', 'folderplus', 'red'],
    ['Recorded', 'wave', ''],
    ['Rendered', 'render', ''],
    ['Samples', 'folderplus', 'teal'],
    ['Sliced audio', 'wave', ''],
    ['Soundfonts', 'folder', '']
];
files.forEach(function (f) {
    var a = el('a', 'file ' + f[2], document.getElementById('files'));
    a.href = '#';
    a.innerHTML = icon(f[1]) + '<span>' + f[0] + '</span>' + (f[0] === 'Packs' ? '<i class="caret"></i>' : '');
});

// pattern picker: name, has piano roll, class, notes as [x, y, width]
var hat = [];
for (var i = 0; i < 16; i++) {
    hat.push([4 + i * 9, 2, 4], [8 + i * 9, 8, 4]);
    if (i % 3 === 1) hat.push([8 + i * 9, 21, 4]);
}
var patterns = [
    ['Synth', 1, 'selected', []],
    ['Jazz', 1, 'red', [[68, 0, 8], [102, 7, 8], [0, 24, 8], [34, 24, 8]]],
    ['Jazz_Slow', 1, 'red', [[90, 0, 11], [0, 24, 10]]],
    ['808', 1, '', [[76, 4, 4], [0, 22, 12], [34, 22, 12], [63, 18, 4], [60, 25, 4], [76, 25, 14], [102, 25, 12], [132, 18, 4], [128, 22, 4]]],
    ['Snare', 1, '', [[17, 24, 4], [51, 24, 4], [85, 24, 4], [106, 24, 3], [119, 24, 3], [132, 24, 3]]],
    ['Kick', 1, '', [[12, 24, 4], [30, 24, 4], [46, 24, 4], [54, 24, 4], [68, 24, 4], [80, 24, 4], [98, 24, 4], [115, 24, 4], [124, 24, 4]]],
    ['Hat', 1, '', hat],
    ['OpenHat', 0, '', []],
    ['Hat - Pap OH', 0, '', []],
    ['Cymbal', 1, '', [[0, 24, 24], [42, 24, 24], [93, 24, 24]]],
    ['808_Melody', 0, 'dark', []]
];
patterns.forEach(function (p) {
    var b = el('button', 'pattern ' + p[2], document.getElementById('patterns'));
    var h = p[0] === 'Hat' ? 5 : 2;
    var notes = p[3].map(function (n) {
        return '<rect x="' + n[0] + '" y="' + n[1] + '" width="' + n[2] + '" height="' + h + '"/>';
    }).join('');
    b.innerHTML = '<svg class="notes">' + notes + '</svg>' +
        (p[1] ? icon('roll', 'roll') : '<i class="dot"></i>') +
        (p[2] === 'selected' ? '<i class="pattern-arrow"></i>' : '') + '<span>' + p[0] + '</span>';
});

// track headers
var tracks = [
    ['', 'partial plain'], ['Main_1', ''], ['Main_2', ''], ['Backup_L', ''], ['Backup_R', ''],
    ['Adlips_1', ''], ['Adlips_2', ''], ['Track 15', 'plain'], ['Track 16', 'plain'], ['Track 17', 'plain off']
];
tracks.forEach(function (t) {
    var d = el('div', 'track ' + t[1], document.getElementById('tracks'));
    d.innerHTML = '<span class="track-name">' + t[0] + '</span>';
    if (t[1] !== 'plain off') {
        d.innerHTML += '<span class="track-more">...</span>' +
            '<input type="checkbox" class="led" checked aria-label="Enable ' + t[0] + '">';
    }
});

// ruler and grid
var ruler = document.getElementById('ruler');
var canvas = document.getElementById('canvas');
for (var bar = 1; bar <= 73; bar += 4) {
    var s = el('span', '', ruler);
    s.textContent = bar;
    s.style.left = Math.round((bar - 1) * BAR + 1) + 'px';
}
var lines = '';
for (var n = 0; n < 240; n++) {
    lines += '<rect x="' + Math.round(n * BAR + 1) + '" y="0" width="1" height="100%" fill="' + (n % 4 ? '#14191b' : '#20272b') + '"/>';
}
canvas.innerHTML = '<svg class="gridlines">' + lines + '</svg>';

var seed = 7;
function rnd() {
    seed = (seed * 16807) % 2147483647;
    return seed / 2147483647;
}

function level(kind, t) {
    var r = rnd();
    if (kind === 'voice') return 0.25 + 0.35 * r + (rnd() > 0.8 ? 0.35 * rnd() : 0);
    if (kind === 'fade') return (0.35 + 0.55 * r) * (1 - t * 0.3);
    if (kind === 'hit') return Math.pow(Math.sin(Math.PI * (0.1 + t * 0.8)), 0.5) * (0.4 + 0.6 * r);
    if (kind === 'late') return t < 0.5 ? 0.03 : Math.sin(Math.PI * (t - 0.4) * 1.5) * (0.5 + 0.5 * r);
    if (kind === 'decay') return 0.9 * Math.exp(-t * 7) + 0.02;
    if (kind === 'thin') return Math.pow(Math.sin(Math.PI * (0.08 + t * 0.8)), 2) * 0.95;
    if (kind === 'blob') return Math.sin(Math.PI * (0.2 + t * 0.7)) * 0.35;
    if (kind === 'tall') return 0.8 + 0.2 * r;
    return 0.05 + 0.2 * r * (Math.sin(t * 13) > -0.3 ? 1 : 0.2);
}

function wave(w, kind) {
    var top = [], bottom = [];
    for (var x = 0; x <= w; x++) {
        var a = level(kind, x / w) * 20;
        var b = a * (0.7 + 0.5 * rnd());
        top.push(x + ',' + (21 - a).toFixed(1));
        bottom.unshift(x + ',' + Math.min(41, 21 + b).toFixed(1));
    }
    return '<svg class="wave" viewBox="0 0 ' + w + ' 41" preserveAspectRatio="none"><polygon points="' +
        top.concat(bottom).join(' ') + '"/></svg>';
}

// clips as [start, end, wave kind, label, class]
var backup = [
    [182, 192, 'hit'], [202, 216, 'hit'], [224, 228, 'hit'], [229, 235, 'hit'], [243, 254, 'hit'], [268, 276, 'hit'],
    [309, 319, 'hit'], [331, 342, 'hit'], [351, 361, 'hit'], [374, 382, 'hit'], [394, 402, 'hit'], [417, 424, 'hit'],
    [427, 430, 'hit'], [431, 436, 'hit'], [439, 442, 'hit'], [443, 448, 'hit'], [460, 468, 'hit'], [470, 479, 'hit'],
    [481, 489, 'hit'], [502, 511, 'hit'], [513, 521, 'hit'], [524, 532, 'hit'], [546, 556, 'hit'], [567, 577, 'hit'],
    [581, 587, 'hit'], [593, 600, 'hit'], [609, 616, 'hit'], [630, 639, 'hit'], [643, 660, 'late'], [673, 684, 'tall']
];
var rows = [
    [43, [
        [175, 192, 'fade'], [195, 216, 'fade'], [218, 253, 'voice', 'R..1'], [256, 267, 'fade'], [268, 275, 'fade'],
        [277, 286, 'voice'], [297, 393, 'voice', 'Rec_Main_01'], [393, 442, 'voice', 'Re.._01'],
        [444, 511, 'voice', 'Rec_..in_01'], [511, 556, 'voice', 'Re..01'], [649, 684, 'fade', 'R..1']
    ]],
    [100, [
        [442, 444, 'thin'], [553, 600, 'voice', 'Re.._02'], [604, 640, 'fade', 'R..02'], [684, 710, 'decay']
    ]],
    [157, backup],
    [214, backup],
    [271, [
        [86, 123, 'low', 'R..01', 'red'], [145, 148, 'blob', '', 'red'], [172, 175, 'blob', '', 'red'], [190, 196, 'thin', '', 'red'],
        [214, 221, 'thin', '', 'red'], [232, 236, 'thin', '', 'red'], [252, 256, 'tall', '', 'red'], [257, 260, 'tall', '', 'red'],
        [288, 297, 'low', '', 'grey'], [340, 344, 'thin', '', 'red'], [466, 471, 'thin', '', 'red'], [488, 491, 'thin', '', 'red'],
        [511, 514, 'thin', '', 'red'], [531, 534, 'thin', '', 'red'], [555, 561, 'low', '', 'red'], [598, 602, 'thin', '', 'red'],
        [678, 682, 'tall', '', 'red'], [683, 687, 'tall', '', 'red']
    ]],
    [328, [
        [124, 127, 'blob', '', 'red'], [192, 196, 'blob', '', 'red'], [285, 289, 'thin', '', 'red'], [296, 299, 'thin', '', 'red'],
        [340, 344, 'thin', '', 'red'], [640, 644, 'tall', '', 'red'], [645, 651, 'tall', '', 'red'],
        [684, 721, 'low', 'R..01', 'red'], [722, 725, 'low', '', 'red'], [727, 746, 'low', '', 'red']
    ]]
];
rows.forEach(function (row) {
    row[1].forEach(function (c) {
        var w = c[1] - c[0];
        var d = el('div', 'clip ' + (c[4] || ''), canvas);
        d.style.left = c[0] + 'px';
        d.style.top = (row[0] + 1) + 'px';
        d.style.width = w + 'px';
        d.innerHTML = '<div class="clip-name">' + (w > 6 ? icon('clip', w < 9 ? 'faded' : '') : '') +
            '<span>' + (c[3] || '') + '</span></div>' + wave(w, c[2]);
    });
});

// automation clips: top, width, name, class, curve
var autos = [
    [385, 755, 'Love Philter - Mix level', '',
        'M0 41H45Q76 41 85 2H120Q123 2 123 41H160Q174 41 179 20H208Q218 20 219 41H290Q325 41 334 2H343Q347 4 347 41H415Q450 41 459 2L496 4 499 26 533 41 593 2H605L632 7 635 41H638Q641 38 643 2L653 4 658 32 661 28 691 41Q725 36 755 11'],
    [442, 747, 'Adlips - Volume', 'green',
        'M0 25L69 40 120 29 125 36 136 25H180L187 22 626 26 638 34 657 23 682 30 747 38']
];
autos.forEach(function (a) {
    var d = el('div', 'clip auto ' + a[3], canvas);
    d.style.left = '1px';
    d.style.top = (a[0] + 1) + 'px';
    d.style.width = a[1] + 'px';
    d.innerHTML = '<div class="clip-name">' + icon('auto') + '<span>' + a[2] + '</span></div>' +
        '<svg class="curve" width="' + a[1] + '"><path stroke="none" d="' + a[4] + 'V41H0z"/><path fill="none" d="' + a[4] + '"/></svg>';
});

// top row: note regions
[[250, 257], [427, 499], [513, 565], [576, 769]].forEach(function (r, k) {
    var d = el('div', 'region', canvas);
    d.style.left = r[0] + 'px';
    d.style.width = (r[1] - r[0]) + 'px';
    if (k === 0) {
        d.innerHTML = '<svg width="7" height="41"><path d="M0 18h1v3H0zM2 20h1v3H2zM4 20h1v3H4zM6 18h1v3H6zM1 24h2v2H1zM5 24h2v2H5z" fill="#a5adb1"/></svg>';
    }
});
[428, 441, 457, 470, 484, 513, 529, 542, 556, 585, 598, 612, 628, 641, 654, 671, 684, 697, 713, 727, 740, 756].forEach(function (x) {
    el('i', 'note', canvas).style.left = x + 'px';
});

// overview map
var map = '<rect x="483" y="0" width="35" height="2" fill="#d0a653"/><rect x="0" y="17" width="610" height="1" fill="#71828a"/>' +
    '<rect x="138" y="3" width="480" height="1" fill="#6b7675"/>';
rows.forEach(function (row, r) {
    row[1].forEach(function (c) {
        map += '<rect x="' + Math.round(c[0] * 0.8) + '" y="' + (5 + r * 2) + '" width="' + Math.max(2, Math.round((c[1] - c[0]) * 0.8)) + '" height="1" fill="#7c848a"/>';
    });
});
document.getElementById('overview').innerHTML = map;
```
